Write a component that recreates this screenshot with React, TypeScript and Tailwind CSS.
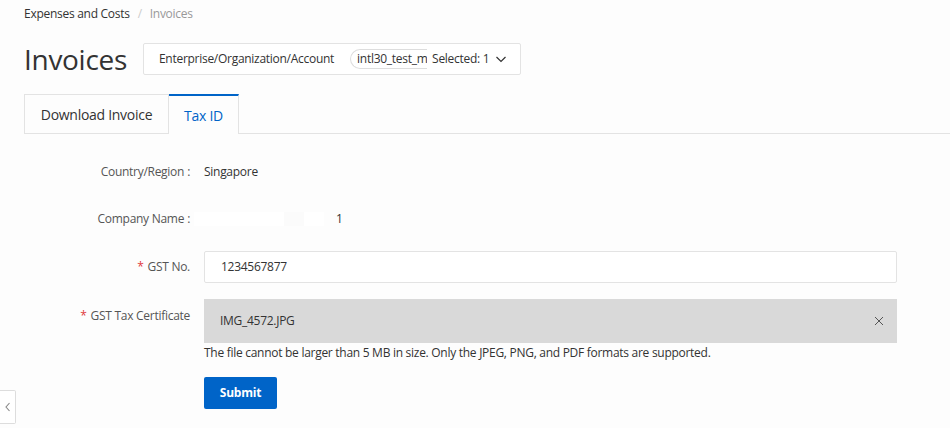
import React from "react";

export default function App() {
  return (
    <div
      className="relative w-[950px] h-[428px] overflow-hidden bg-[#fdfdfd] text-[#333333] tracking-[-0.28px]"
      style={{ fontFamily: '"Open Sans", "Noto Sans", sans-serif' }}
    >
      {/* Breadcrumb */}
      <div className="flex items-center h-[16px] mt-[6px] pl-[24px] text-[12px] leading-[16px]">
        <span className="text-[#333333]">Expenses and Costs</span>
        <span className="mx-[8px] text-[#cccccc]">/</span>
        <span className="text-[#999999]">Invoices</span>
      </div>

      {/* Header */}
      <div className="flex items-center mt-[21px] pl-[24px] h-[32px]">
        <h1 className="text-[28px] leading-[32px] font-medium text-[#333333] tracking-[-0.3px]">Invoices</h1>
        <div className="ml-[16px] flex items-center h-[32px] w-[378px] border border-[#e3e3e3] rounded-[2px] bg-white pl-[15px] text-[12px]">
          <span className="whitespace-nowrap">Enterprise/Organization/Account</span>
          <div className="ml-[16px] h-[20px] w-[77px] overflow-hidden rounded-l-full border border-r-0 border-[#dddddd] pl-[6px] flex items-center">
            <span className="whitespace-nowrap">intl30_test_member</span>
          </div>
          <span className="ml-[5px] whitespace-nowrap">Selected: 1</span>
          <svg className="ml-[6px]" width="12" height="12" viewBox="0 0 12 12" fill="none">
            <path d="M1.5 4 L6 8.5 L10.5 4" stroke="#333" strokeWidth="1.2" />
          </svg>
        </div>
      </div>

      {/* Tabs */}
      <div className="flex mt-[19px] pl-[24px] h-[40px]">
        <div className="h-[40px] w-[145px] flex items-center justify-center border border-[#e3e3e3] text-[14px] text-[#333333]">
          Download Invoice
        </div>
        <div className="h-[40px] w-[70px] flex items-center justify-center border-t-2 border-t-[#0064c8] border-r border-r-[#e3e3e3] text-[14px] text-[#0064c8] font-medium">
          Tax ID
        </div>
        <div className="flex-1 border-b border-[#e3e3e3]" />
      </div>

      {/* Form */}
      <div className="flex flex-col text-[12px] mt-[28px]">
        <div className="flex items-center h-[20px]">
          <div className="w-[190px] text-right text-[#555555]">Country/Region<span className="ml-[3px]">:</span></div>
          <div className="ml-[14px] text-[#333333]">Singapore</div>
        </div>

        <div className="flex items-center h-[20px] mt-[27px]">
          <div className="w-[190px] text-right text-[#555555]">Company Name<span className="ml-[3px]">:</span></div>
          <div className="ml-[4px] flex items-center">
            <div className="w-[90px] h-[14px] bg-white" />
            <div className="w-[20px] h-[14px] bg-[#fbfbfb]" />
            <div className="w-[20px] h-[14px] bg-white" />
            <div className="w-[12px] h-[14px] bg-[#fdfdfd]" />
            <span className="text-[#333333]">1</span>
          </div>
        </div>

        <div className="flex items-center mt-[22px]">
          <div className="w-[190px] text-right text-[#555555]"><span className="text-[#e0393e] mr-[4px]">*</span>GST No.</div>
          <div className="ml-[14px] h-[32px] w-[693px] border border-[#e3e3e3] rounded-[2px] bg-white flex items-center pl-[16px] text-[#333333]">
            1234567877
          </div>
        </div>

        <div className="flex items-start mt-[16px]">
          <div className="w-[190px] text-right text-[#555555] mt-[8px]"><span className="text-[#e0393e] mr-[4px]">*</span>GST Tax Certificate</div>
          <div className="ml-[14px] flex flex-col">
            <div className="h-[44px] w-[693px] bg-[#d9d9d9] flex items-center justify-between pl-[16px] pr-[13px] text-[#333333]">
              <span>IMG_4572.JPG</span>
              <svg width="10" height="10" viewBox="0 0 10 10" fill="none">
                <path d="M1 1 L9 9 M9 1 L1 9" stroke="#555" strokeWidth="1" />
              </svg>
            </div>
            <div className="mt-[1px] h-[18px] leading-[18px] text-[#333333]">
              The file cannot be larger than 5 MB in size. Only the JPEG, PNG, and PDF formats are supported.
            </div>
            <button className="mt-[15px] w-[73px] h-[32px] rounded-[2px] bg-[#0064c8] text-white font-bold text-[12px] tracking-[-0.2px]">
              Submit
            </button>
          </div>
        </div>
      </div>

      {/* Collapse button */}
      <div className="absolute left-0 top-[390px] w-[16px] h-[34px] border border-l-0 border-[#dddddd] rounded-r-[2px] bg-white flex items-center justify-center">
        <svg width="8" height="12" viewBox="0 0 8 12" fill="none">
          <path d="M5.5 2 L2 6 L5.5 10" stroke="#888" strokeWidth="1.1" />
        </svg>
      </div>
    </div>
  );
}
